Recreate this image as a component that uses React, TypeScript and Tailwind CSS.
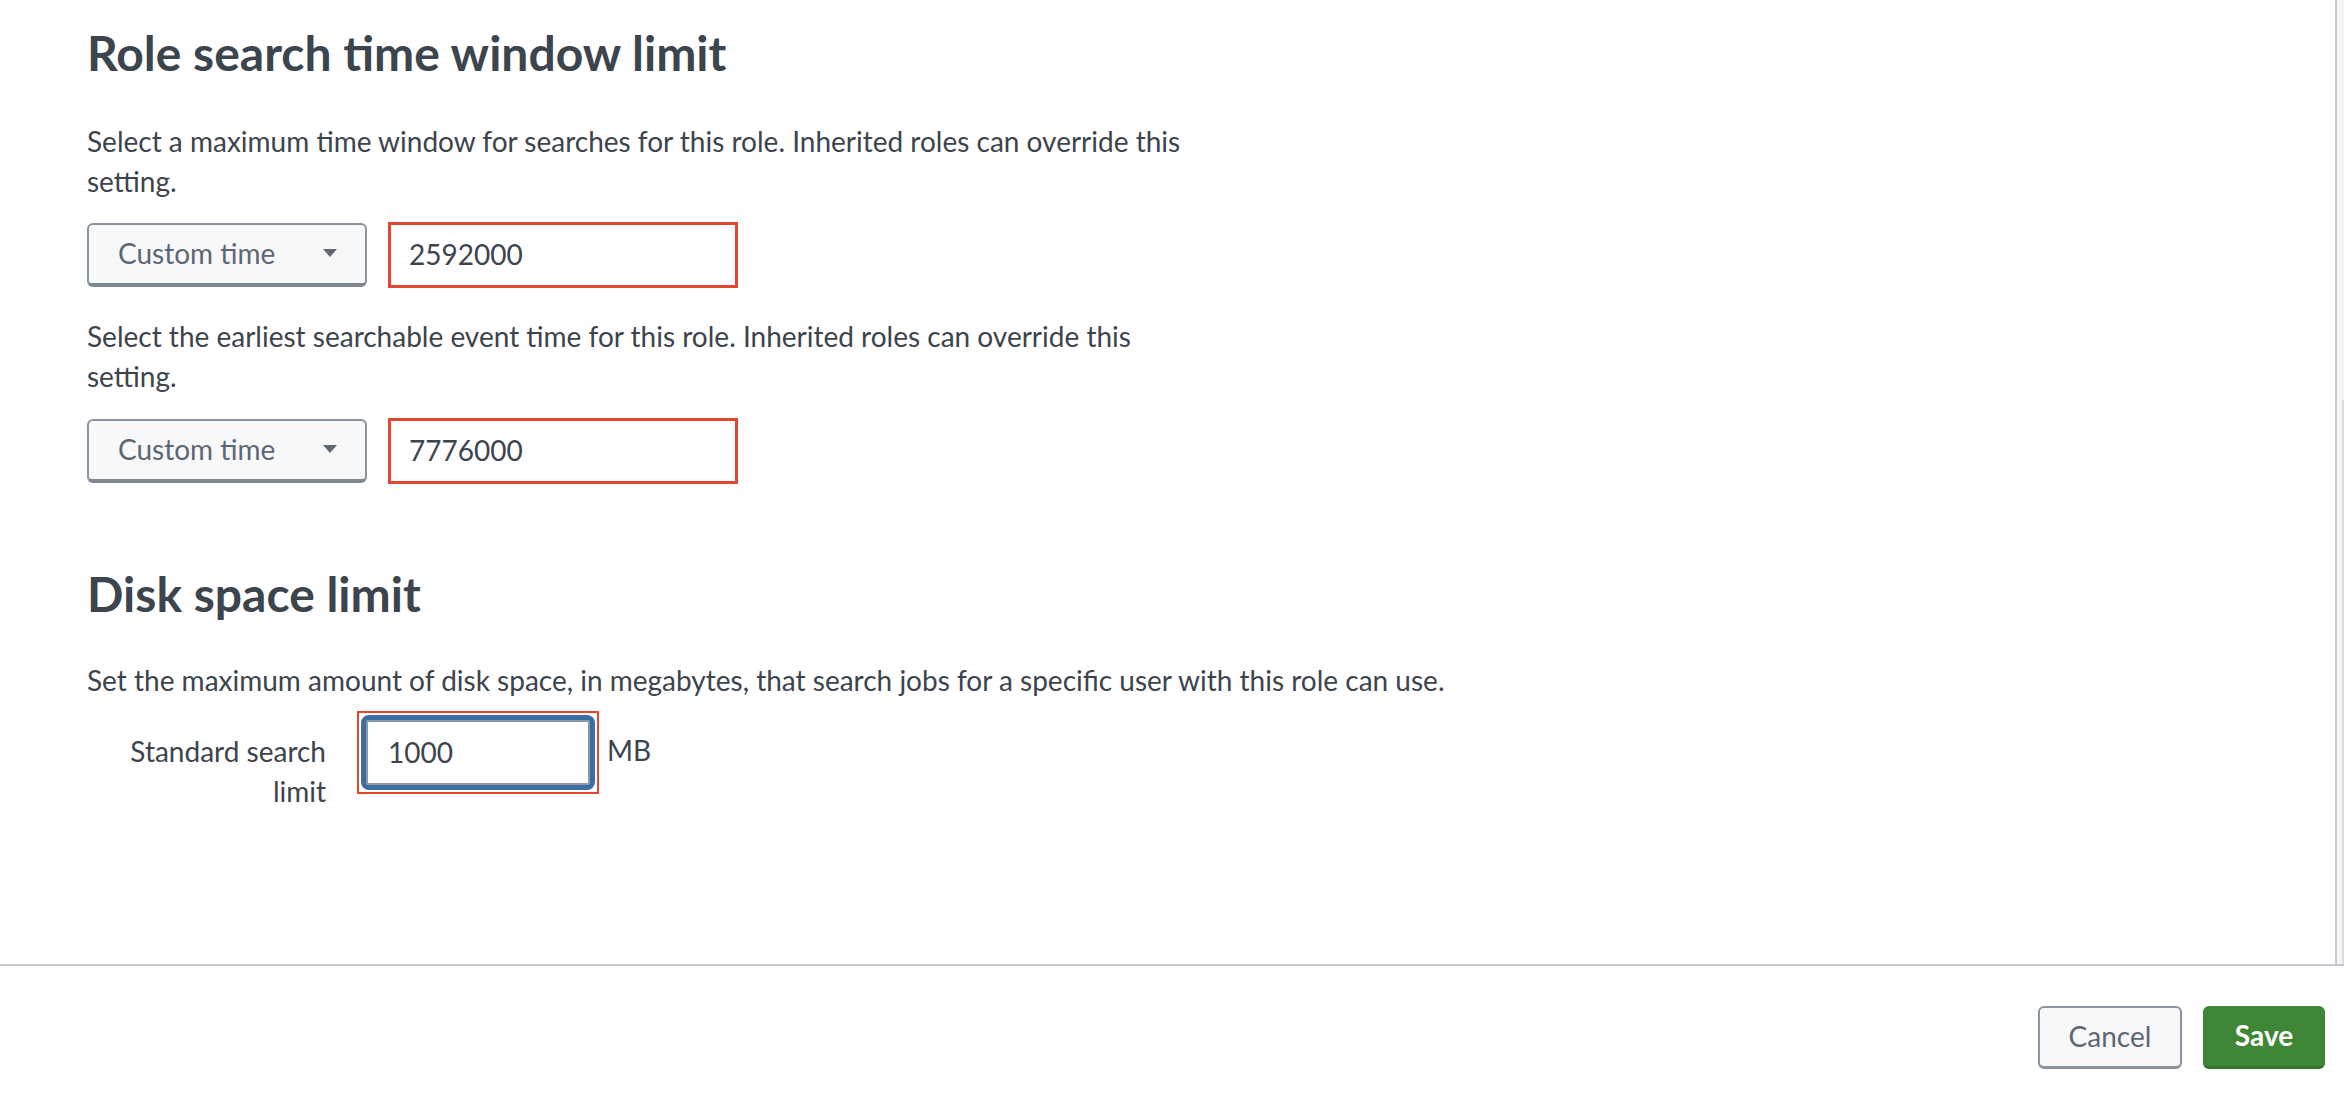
import React from "react";

const font = { fontFamily: "Lato, 'Open Sans', sans-serif" };

function TimeSelect() {
  return (
    <div className="flex h-[64px] w-[280px] items-center justify-between rounded-[6px] border-2 border-b-[4px] border-[#8a949f] border-b-[#7d8791] bg-[#f7f8fa] pb-[2px] pl-[29px] pr-[28px] text-[28px] text-[#5c6773]">
      <span>Custom time</span>
      <svg width="14" height="8" viewBox="0 0 14 8">
        <path d="M0 0 H14 L7 8 Z" fill="#5c6773" />
      </svg>
    </div>
  );
}

function SecondsInput({ value }: { value: string }) {
  return (
    <div className="ml-[21px] flex h-[66px] w-[350px] items-center border-[3px] border-[#e4472f] bg-white pb-[3px] pl-[18px] text-[28px] text-[#3c444d]">
      {value}
    </div>
  );
}

export default function App() {
  return (
    <div className="flex h-[1096px] w-full flex-col bg-white text-[#3c444d]" style={font}>
      <div className="flex min-h-0 flex-1">
        <div className="flex-1 pl-[87px]">
          <h2 className="mt-[29px] text-[48px] font-bold leading-[48px] text-[#3c444d]">
            Role search time window limit
          </h2>
          <p className="mt-[44px] max-w-[1110px] text-[28px] leading-[40px]">
            Select a maximum time window for searches for this role. Inherited roles can override this setting.
          </p>
          <div className="mt-[21px] flex items-center">
            <TimeSelect />
            <SecondsInput value="2592000" />
          </div>
          <p className="mt-[28px] max-w-[1110px] text-[28px] leading-[40px]">
            Select the earliest searchable event time for this role. Inherited roles can override this setting.
          </p>
          <div className="mt-[22px] flex items-center">
            <TimeSelect />
            <SecondsInput value="7776000" />
          </div>

          <h2 className="mt-[86px] text-[48px] font-bold leading-[48px] text-[#3c444d]">
            Disk space limit
          </h2>
          <p className="mt-[42px] text-[28px] leading-[40px]">
            Set the maximum amount of disk space, in megabytes, that search jobs for a specific user with this role can use.
          </p>
          <div className="mt-[11px] flex items-start">
            <div className="mt-[20px] w-[239px] text-right text-[28px] leading-[40px]">
              Standard search
              <br />
              limit
            </div>
            <div className="ml-[31px] border-2 border-[#e8472e] p-[2px]">
              <div className="flex h-[75px] w-[234px] items-center rounded-[8px] border-[5px] border-[#3a6ea3] bg-white pb-[2px] pl-[22px] text-[28px] text-[#3c444d] shadow-[inset_0_0_0_2px_#8e98a2]">
                1000
              </div>
            </div>
            <div className="ml-[8px] mt-[19px] text-[28px] leading-[40px]">MB</div>
          </div>
        </div>
        <div className="flex w-[9px] border-l-2 border-[#cbcbcb] bg-[#f6f6f6]">
          <div className="ml-auto mt-[400px] w-[2px] bg-[#dcdcdc]" />
        </div>
      </div>

      <div className="h-[2px] w-full bg-[#c3c7d1]" />

      <div className="flex h-[130px] items-start justify-end gap-[21px] pr-[19px] pt-[40px]">
        <button className="h-[63px] w-[144px] rounded-[6px] border-2 border-b-[3px] border-[#8a949f] bg-[#f7f8fa] pb-[2px] text-[28px] text-[#5c6773]">
          Cancel
        </button>
        <button className="h-[63px] w-[122px] rounded-[6px] border-b-[3px] border-[#37752f] bg-[#408637] pb-[2px] text-[28px] font-bold text-white">
          Save
        </button>
      </div>
    </div>
  );
}
